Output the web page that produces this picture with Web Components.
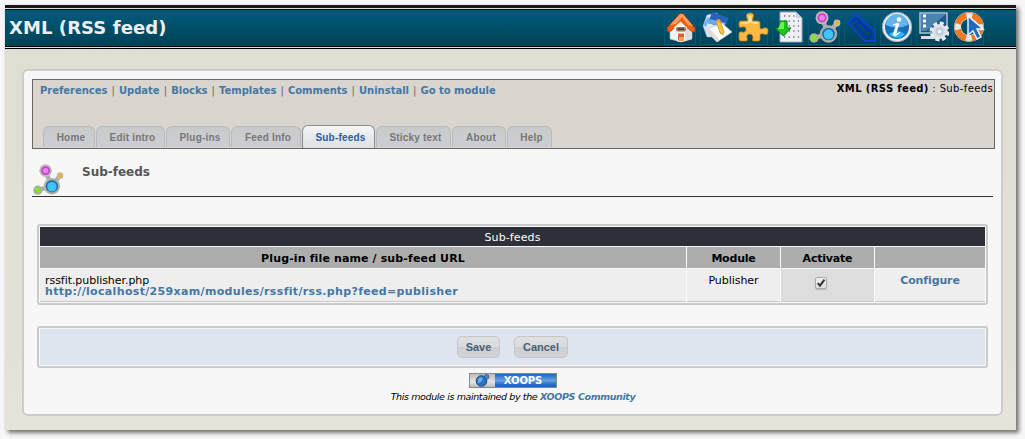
<!DOCTYPE html>
<html lang="en">
<head>
<meta charset="utf-8">
<title>XML (RSS feed)</title>
<style>
html,body{margin:0;height:100%;overflow:hidden}
body{background:#f7f7f7;font:11px/13px Verdana,"DejaVu Sans",sans-serif;color:#000}
</style>
</head>
<body>
<admin-page></admin-page>

<template id="t-page">
<style>
:host{display:block;box-sizing:border-box;padding:5px 9px 9px 5px;height:439px;width:1025px}
.frame{box-sizing:border-box;width:1011px;height:425px;background:linear-gradient(#e0ded3 0,#e0ded3 150px,#e3e0d6 200px,#e3e0d7 340px,#e6e3da 400px);box-shadow:3px 3px 4px #777,0 0 2px #ddd}
.panel{box-sizing:border-box;margin:20px 13px 0 17px;width:981px;height:347px;border:2px solid #ccc;border-radius:6px;background:#f7f7f7;padding:8px 6px 0 8px}
.title{display:flex;height:48px;width:961px;border-bottom:1px solid #333;box-sizing:border-box;font:bold 12px/16px "DejaVu Sans",sans-serif;color:#555}
.title app-icon{width:31px;height:31px;margin:15px 0 0 1px}
.title span{margin:15px 0 0 18px}
feed-table{margin:27px 0 0 5px}
button-bar{margin:21px 0 0 5px}
module-credit{margin-top:5px}
</style>
<div class="frame">
 <page-header></page-header>
 <div class="panel">
  <module-nav></module-nav>
  <div class="title"><app-icon name="module"></app-icon><span>Sub-feeds</span></div>
  <feed-table></feed-table>
  <button-bar></button-bar>
  <module-credit></module-credit>
 </div>
</div>
</template>

<template id="t-header">
<style>
:host{display:flex;box-sizing:border-box;height:44px;border-top:3px solid #181818;border-bottom:1px solid #000;background:#000;flex-direction:column}
.rule{height:1px;background:#d8dddd}
.bar{height:36px;margin:1px 0;display:flex;justify-content:space-between;background:linear-gradient(#005b7e,#004255);padding:0 32px 0 4px}
h1{margin:0;font:bold 18px/35px "DejaVu Sans",sans-serif;color:#eee;letter-spacing:.08px}
nav{display:flex;gap:4px}
.cell{box-sizing:border-box;width:32px;height:34px;margin-top:1px;border:1px solid #045a72}
app-icon{width:32px;height:32px;margin:-1px 0 0}
</style>
<div class="rule"></div>
<div class="bar"><h1>XML (RSS feed)</h1><nav></nav></div>
<div class="rule"></div>
</template>

<template id="t-nav">
<style>
:host{display:flex;flex-direction:column;justify-content:space-between;box-sizing:border-box;width:963px;height:70px;border:1px solid #666;background:#dad5ce}
.top{display:flex;justify-content:space-between;padding:4px 1px 0 7px}
.links{color:#666;line-height:14px;white-space:pre;font-size:10px;word-spacing:.9px}
a{font-weight:bold;color:#4477a5;letter-spacing:-.02px;word-spacing:0}
.crumb{font-size:10px;line-height:10px;white-space:pre;letter-spacing:.37px}
.tabs{display:flex;align-items:flex-end;gap:1px;padding:0 0 0 10px}
</style>
<div class="top"><div class="links"></div><div class="crumb"><b>XML (RSS feed)</b> : <span>Sub-feeds</span></div></div>
<div class="tabs"></div>
</template>

<template id="t-tab">
<style>
:host{display:block;box-sizing:border-box;height:21px;border:1px solid #b9bbbb;border-bottom:0;border-radius:6px 6px 0 0;background:linear-gradient(#c8cac9 0,#cbcccf 50%,#cccdd2 50%);color:#777;font:bold 10px/21px "Liberation Sans",Arial,sans-serif;text-align:center;margin-bottom:1px;white-space:nowrap;letter-spacing:.2px;padding-left:4px}
:host([active]){height:23px;margin:0;background:linear-gradient(#f5f6f7,#e8eaed 45%,#dfe0e4);border-color:#8a8c90;color:#2a5da0;line-height:23px}
</style><slot></slot>
</template>

<template id="t-table">
<style>
:host{display:grid;box-sizing:border-box;width:951px;height:81px;border:2px solid #c9cbcb;border-radius:3px;padding:1px;background:#f9f9f9;grid-template-columns:646px 93px 93px 110px;grid-template-rows:19px 21px 33px;gap:1px;text-align:center}
.cap{grid-column:1/-1;background:#2d3039;color:#fff;line-height:21px;letter-spacing:.1px}
.h{background:#adadad;font-weight:bold;line-height:23px;letter-spacing:-.2px}
.wide{letter-spacing:.13px}
.c{background:#eee;border-bottom:1px solid #c9cbcb;padding-top:5px;line-height:13px;letter-spacing:-.05px}
.file{text-align:left;padding-left:5px;line-height:11px;padding-top:6px;height:26px}
.odd{background:#ddd}
a{color:#4477a5;font-weight:bold;letter-spacing:-.12px}
.file a{letter-spacing:.335px}
.cb{display:inline-block;box-sizing:border-box;width:12px;height:12px;border:1px solid #aaa;border-radius:2px;background:linear-gradient(#eee,#ddd);margin:3px 13px 0 0;box-shadow:0 1px 1px #bbb}
.cb svg{display:block}
</style>
<div class="cap">Sub-feeds</div>
<div class="h wide">Plug-in file name / sub-feed URL</div><div class="h">Module</div><div class="h">Activate</div><div class="h"></div>
<div class="c file">rssfit.publisher.php<br><a>http://localhost/259xam/modules/rssfit/rss.php?feed=publisher</a></div>
<div class="c">Publisher</div>
<div class="c odd"><span class="cb"><svg width="10" height="10" viewBox="0 0 10 10"><path d="M1.8 5.2 4 7.7 8.5 1.7" fill="none" stroke="#333" stroke-width="2"/></svg></span></div>
<div class="c"><a>Configure</a></div>
</template>

<template id="t-bar">
<style>
:host{display:flex;box-sizing:border-box;width:951px;height:42px;border:2px solid #c9cbcb;border-radius:3px;padding:1px;background:#dee5ef;background-clip:content-box;justify-content:center;align-items:center;gap:14px}
span{box-sizing:border-box;height:22px;border:1px solid #c5c6c9;border-radius:5px;background:linear-gradient(#dedfe0,#d9dadc 50%,#cecfd3 50%,#d3d4d8);color:#456077;font:bold 11px/20px "Liberation Sans",Arial,sans-serif;text-align:center;margin-top:-1px}
.s{width:43px}.c{width:54px}
</style><span class="s">Save</span><span class="c">Cancel</span>
</template>

<template id="t-credit">
<style>
:host{display:flex;flex-direction:column;align-items:center;width:961px;font:italic 9.5px/13px "DejaVu Sans",sans-serif}
.badge{display:flex;box-sizing:border-box;width:88px;height:15px;border:1px solid #888;margin-left:1px}
.globe{width:25px;background:linear-gradient(#bbb,#e4e4e4 60%,#bbb)}
.globe svg{display:block}
.name{flex:1;background:linear-gradient(#1868c2,#6a9ee0 50%,#1669c5 85%);color:#fff;font:bold 10px/14px "DejaVu Sans",sans-serif;text-align:center;padding-right:5px;letter-spacing:-.1px}
p{margin:2px 0 0 1px;letter-spacing:-.38px;white-space:nowrap}
b{color:#4477a5}
</style>
<div class="badge"><div class="globe"><svg width="25" height="13" viewBox="0 0 25 13"><circle cx="11.5" cy="7" r="5.3" fill="#2a72c4" stroke="#234876"/><path d="M8 5l3-2 2 2-2 3-3 1z" fill="#69aef0"/><circle cx="16.7" cy="2.8" r="2.3" fill="#468bd2" stroke="#234876" stroke-width=".7"/></svg></div><div class="name">XOOPS</div></div>
<p>This module is maintained by the <b>XOOPS Community</b></p>
</template>

<script>
const icons = {
home:`<path d="M5 17h22v11l-11 3-11-3z" fill="#f2f2f2" stroke="#bbb" stroke-width=".6"/><path d="M20 16h7v12l-7 2z" fill="#ddd"/><path d="M14.5 3 2 17l1 4 3-1 9.5-9L26 20l4 1V17L18 3z" fill="#ef5f16" stroke="#c33e05" stroke-width=".8"/><path d="M15 3h3l10 12-5-1-6-8-6 7-6 1z" fill="#ff9c59"/><path d="M15.5 10.5l7 6.5H8.500z" fill="#fff3e5"/><rect x="11" y="16" width="10" height="4.5" rx="2" fill="#9a7452"/><path d="M13 17.3h6v1.700h-6z" fill="#444"/><path d="M12.5 22h7v8h-7z" fill="#d3622a" stroke="#fff"/><path d="M14 26h5v4h-5z" fill="#f09a63"/>`,
notes:`<path d="M2 15 6 4l9-2 11 7-8 17-12 0z" fill="#dce9f8" stroke="#8ba9cc" stroke-width=".5"/><path d="M11 1l17 6-5 10-16-5z" fill="#2463b8"/><path d="M9 8l16 4-3 4-15-4z" fill="#6fa9ea"/><path d="M2 14l5-8 2 1-4 9z" fill="#74b4ea"/><path d="M4 19l17-7 10 9-15 10z" fill="#fff" stroke="#bbb" stroke-width=".6"/><path d="M4 19l5-1 9 10-2 3z" fill="#ddd"/><path d="M15 10l4-1 4 12-1 3-3-2z" fill="#ffc13b" stroke="#c98a22" stroke-width=".7"/><path d="M15 10l4-1" stroke="#e7935c" stroke-width="2"/>`,
puzzle:`<path d="M2 12q0-2 2-2h6q1-1 0-3-2-5 3-5t3 5q-1 2 0 3h5q2 0 2 2v5q1 2 4 0 4-1 4 3 0 5-4 3-4-1-4 1v5q0 1-2 1h-5q-1-1 0-3 0-4-3-4-4 0-3 4 1 3-1 3H4q-2 0-2-2v-6q1-2 3-1 4 1 4-3 0-3-4-2-3 1-3-1z" fill="#fcb944" stroke="#c77c10" stroke-width=".8"/><path d="M4 12h7q3-2 1-6 1-2 2 0-1 5 2 6h5" fill="none" stroke="#ffe5a6" stroke-width="1.5"/>`,
sheet:`<path d="M7 1h16l6 6v24H7z" fill="#edf1f6" stroke="#9bacc0"/><path d="M23 1v6h6z" fill="#c4d3e3"/><path d="M11 5h11M11 10h15M11 15h15M11 20h15M11 26h15" stroke="#778" stroke-width="1.4" stroke-dasharray="1.4 3.2"/><path d="M7 10h7v7h4l-7.500 8L2 17h5z" fill="#19c819" stroke="#087a0a"/><path d="M8 11h3v7H5" fill="#72ef52"/>`,
module:`<g stroke="#a8a8a8" stroke-width="4.5" fill="none"><path d="M13 7l6 16L28 12M19 23 5 27"/></g><circle cx="13" cy="6.8" r="6.5" fill="#bbb"/><circle cx="13" cy="6.8" r="4.6" fill="#cb42c9"/><circle cx="13" cy="6.8" r="2.8" fill="#f27ff2"/><circle cx="28" cy="12" r="3.4" fill="#bbb"/><circle cx="28" cy="12" r="2" fill="#f6b500"/><circle cx="5" cy="27" r="4.7" fill="#aaa"/><circle cx="5" cy="27" r="3.2" fill="#8add35"/><circle cx="19.5" cy="23" r="8.4" fill="#aaa" stroke="#ccc" stroke-width=".5"/><circle cx="19.5" cy="23" r="6.3" fill="#176cae"/><ellipse cx="19.5" cy="23.5" rx="4.8" ry="5" fill="#40c5f3"/>`,
clip:`<path d="M20 30 3 12 11 3 30 20v10z" fill="none" stroke="#0a44cc" stroke-width="1.8"/><path d="M7 11l4-4 15 14v5h-5L10 14l4-3 10 10" stroke="#0b2bc4" stroke-width="1.7" fill="none"/>`,
info:`<circle cx="16" cy="16" r="14.7" fill="#e7ebef" stroke="#9cacb8"/><circle cx="16" cy="16" r="12" fill="#1670b6"/><path d="M5 14a11 11 0 0 1 22 0q-11 5-22 0" fill="#63b5ed"/><path d="M8 23q8-6 16 0-8 8-16 0" fill="#35b8f2"/><circle cx="18" cy="8.5" r="2.3" fill="#fff"/><path d="M12 14q6-3 6-1l-3 9q0 2 4-1-5 6-7 3l3-9q0-2-3-1z" fill="#fff" stroke="#fff" stroke-width=".7"/>`,
system:`<path d="M3 2h27v20H3z" fill="#1f5787" stroke="#aec2d3" stroke-width="1.5"/><path d="M4 3h25L9 20H4z" fill="#4a83b0"/><path d="M6 5h3M6 10h3M6 15h3" stroke="#fff" stroke-width="3"/><path d="M4 25h17v3H4z" fill="#ddd"/><g transform="translate(22.5 20.5)"><circle r="7.5" fill="#d9e0e7"/><circle r="8" fill="none" stroke="#e6eaee" stroke-width="4" stroke-dasharray="3.8 2.48"/><circle r="4" fill="#b9cbdc"/><circle r="2" fill="#f5f8fa"/></g>`,
help:`<circle cx="16" cy="16" r="11.5" fill="none" stroke="#e9e9e9" stroke-width="7"/><circle cx="16" cy="16" r="11.5" fill="none" stroke="#f17820" stroke-width="6" stroke-dasharray="12 6.06" stroke-dashoffset="-3"/><circle cx="16" cy="16" r="14.5" fill="none" stroke="#b9652a" stroke-width=".6"/><path d="M15 5v19l5-4 4 8 4-2-4-8h6z" fill="#2468bb" stroke="#e8f1fa" stroke-width="1.5"/>`
};
class Base extends HTMLElement{
 constructor(id){super();this.attachShadow({mode:'open'}).append(document.getElementById(id).content.cloneNode(true))}
}
customElements.define('app-icon',class extends HTMLElement{
 constructor(){super();this.attachShadow({mode:'open'})}
 connectedCallback(){this.shadowRoot.innerHTML=`<style>:host{display:block}svg{display:block;width:100%;height:100%}</style><svg viewBox="0 0 32 32">${icons[this.getAttribute('name')]}</svg>`}
});
customElements.define('nav-tab',class extends Base{constructor(){super('t-tab')}});
customElements.define('page-header',class extends Base{constructor(){super('t-header');
 this.shadowRoot.querySelector('nav').innerHTML=['home','notes','puzzle','sheet','module','clip','info','system','help'].map(n=>`<div class="cell"><app-icon name="${n}"></app-icon></div>`).join('')}});
customElements.define('module-nav',class extends Base{constructor(){super('t-nav');
 this.shadowRoot.querySelector('.links').innerHTML=['Preferences','Update','Blocks','Templates','Comments','Uninstall','Go to module'].map(n=>`<a>${n}</a>`).join(' | ');
 this.shadowRoot.querySelector('.tabs').innerHTML=[['Home',52],['Edit intro',69],['Plug-ins',64],['Feed Info',70],['Sub-feeds',73],['Sticky text',75],['About',54],['Help',45]].map(([n,w])=>`<nav-tab style="width:${w}px"${n==='Sub-feeds'?' active':''}>${n}</nav-tab>`).join('')}});
customElements.define('feed-table',class extends Base{constructor(){super('t-table')}});
customElements.define('button-bar',class extends Base{constructor(){super('t-bar')}});
customElements.define('module-credit',class extends Base{constructor(){super('t-credit')}});
customElements.define('admin-page',class extends Base{constructor(){super('t-page')}});
</script>
</body>
</html>
